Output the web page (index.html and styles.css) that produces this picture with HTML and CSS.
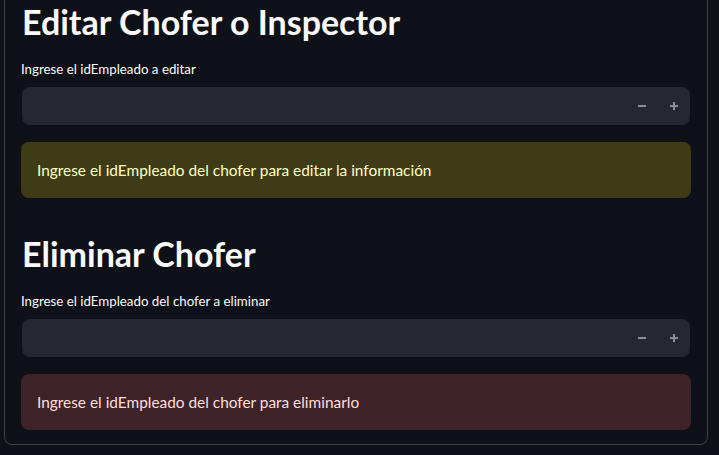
FILE: index.html
```html
<!DOCTYPE html>
<html lang="es">
<head>
<meta charset="utf-8">
<title>Editar Chofer</title>
<link rel="stylesheet" href="styles.css">
</head>
<body>
<div class="container">
  <section class="section">
    <h2 class="heading">Editar Chofer o Inspector</h2>
    <div class="widget">
      <label class="label">Ingrese el idEmpleado a editar</label>
      <div class="number-input">
        <input class="field" type="text" value="">
        <button class="step" aria-label="decrement">
          <svg width="10" height="10" viewBox="0 0 10 10"><rect x="1" y="4" width="8" height="2" fill="currentColor"/></svg>
        </button>
        <button class="step" aria-label="increment">
          <svg width="10" height="10" viewBox="0 0 10 10"><rect x="1" y="4" width="8" height="2" fill="currentColor"/><rect x="4" y="1" width="2" height="8" fill="currentColor"/></svg>
        </button>
      </div>
    </div>
    <div class="alert warning">Ingrese el idEmpleado del chofer para editar la información</div>
  </section>
  <section class="section second">
    <h2 class="heading">Eliminar Chofer</h2>
    <div class="widget">
      <label class="label">Ingrese el idEmpleado del chofer a eliminar</label>
      <div class="number-input">
        <input class="field" type="text" value="">
        <button class="step" aria-label="decrement">
          <svg width="10" height="10" viewBox="0 0 10 10"><rect x="1" y="4" width="8" height="2" fill="currentColor"/></svg>
        </button>
        <button class="step" aria-label="increment">
          <svg width="10" height="10" viewBox="0 0 10 10"><rect x="1" y="4" width="8" height="2" fill="currentColor"/><rect x="4" y="1" width="2" height="8" fill="currentColor"/></svg>
        </button>
      </div>
    </div>
    <div class="alert error">Ingrese el idEmpleado del chofer para eliminarlo</div>
  </section>
</div>
</body>
</html>
```
FILE: styles.css
```css
html, body {
  margin: 0;
  padding: 0;
  background: #0e1117;
  color: #fafafa;
  font-family: Lato, "Noto Sans", sans-serif;
  overflow: hidden;
}
.container {
  margin-left: 4px;
  width: 704px;
  border: 1px solid rgba(250, 250, 250, 0.2);
  border-top: none;
  border-radius: 0 0 8px 8px;
  padding: 0 16px 14px 16px;
  box-sizing: border-box;
}
.section {
  display: flex;
  flex-direction: column;
}
.second {
  margin-top: 34px;
}
.heading {
  margin: 0;
  font-size: 34px;
  line-height: 44px;
  font-weight: 700;
  color: #fafafa;
  padding-left: 1px;
}
.widget {
  display: flex;
  flex-direction: column;
  margin-top: 14px;
}
.label {
  font-size: 13.3px;
  line-height: 22px;
  margin-bottom: 7px;
  color: #fafafa;
}
.number-input {
  display: flex;
  align-items: center;
  height: 38px;
  background: #262730;
  border-radius: 8px;
  margin: 0 1px;
}
.field {
  flex: 1;
  min-width: 0;
  background: transparent;
  border: none;
  outline: none;
  color: #fafafa;
  padding: 0 12px;
  height: 100%;
  font: inherit;
}
.step {
  width: 32px;
  height: 100%;
  background: transparent;
  border: none;
  color: #8b8e97;
  display: flex;
  align-items: center;
  justify-content: center;
  padding: 0;
}
.alert {
  margin-top: 17px;
  height: 56px;
  box-sizing: border-box;
  padding: 16px;
  border-radius: 8px;
  font-size: 15.4px;
  line-height: 24px;
}
.warning {
  background: #3e3b16;
  color: #ffffc2;
}
.error {
  background: #3e2328;
  color: #ffdede;
}
```
